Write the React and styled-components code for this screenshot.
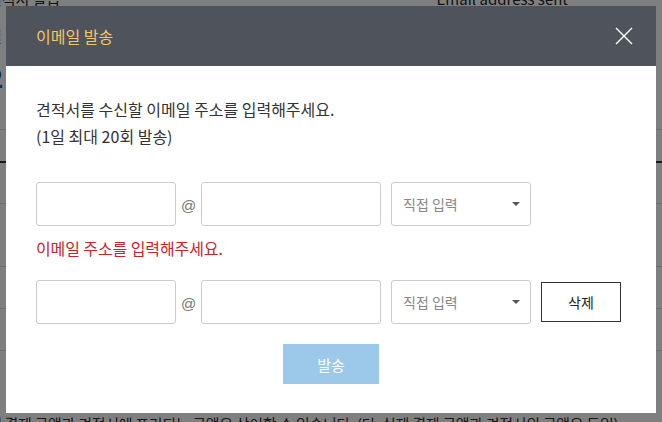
import React from 'react';
import styled, { createGlobalStyle } from 'styled-components';

const Global = createGlobalStyle`
  html, body {
    margin: 0;
    padding: 0;
    background: #fff;
  }
  body {
    font-family: "Noto Sans CJK KR", "Noto Sans", sans-serif;
    width: 662px;
    height: 422px;
    overflow: hidden;
  }
`;

const Screen = styled.div`
  position: relative;
  width: 662px;
  height: 422px;
  overflow: hidden;
`;

/* page behind the dim layer */
const Page = styled.div`
  margin-left: -12px;
  width: 700px;
  color: #222;
  font-size: 15px;
`;

const PageTop = styled.div`
  height: 129px;
  display: grid;
  grid-template-rows: 14px 34px auto;
  align-items: start;
`;

const PageTopRow = styled.div`
  display: flex;
  justify-content: space-between;
  line-height: 14px;
  margin-top: -8px;
  padding-right: 120px;
`;

const PageLabel = styled.div`
  line-height: 20px;
  margin-top: 12px;
`;

const BigNumber = styled.div`
  color: #1f5fa8;
  font-size: 26px;
  font-weight: 700;
  line-height: 30px;
  margin-top: 14px;
`;

const TableRow = styled.div`
  height: ${p => p.$h}px;
  border-top: ${p => (p.$strong ? '2px solid #333' : '1px solid #ddd')};
  box-sizing: border-box;
`;

const PageNote = styled.div`
  margin-top: 21px;
  white-space: nowrap;
  color: #333;
  letter-spacing: -0.3px;
`;

const Dim = styled.div`
  position: absolute;
  inset: 0;
  background: rgba(0, 0, 0, 0.5);
`;

/* modal */
const Modal = styled.div`
  position: absolute;
  top: 6px;
  left: 6px;
  width: 650px;
  height: 407px;
  background: #fff;
  display: flex;
  flex-direction: column;
`;

const Header = styled.div`
  height: 60px;
  background: #4f535b;
  display: flex;
  align-items: center;
  justify-content: space-between;
  padding: 0 22px 0 30px;
`;

const Title = styled.h2`
  margin: 0;
  font-size: 16px;
  font-weight: 400;
  color: #f5c66a;
`;

const CloseButton = styled.button`
  border: 0;
  background: none;
  padding: 0;
  width: 20px;
  height: 20px;
  display: flex;
  align-items: center;
  justify-content: center;
  cursor: pointer;
`;

const Body = styled.div`
  padding: 30px 30px 0;
  display: flex;
  flex-direction: column;
`;

const Guide = styled.p`
  margin: 0;
  font-size: 16px;
  line-height: 27px;
  color: #333;
`;

const EmailRow = styled.div`
  display: flex;
  align-items: center;
  height: 44px;
  margin-top: ${p => p.$mt}px;
`;

const Field = styled.input`
  box-sizing: border-box;
  width: ${p => p.$w}px;
  height: 44px;
  border: 1px solid #ccc;
  border-radius: 3px;
  padding: 0 10px;
  font-size: 14px;
  font-family: inherit;
  outline: none;
`;

const At = styled.span`
  width: 25px;
  text-align: center;
  color: #777;
  font-size: 15px;
  font-family: "Liberation Sans", sans-serif;
  padding-top: 3px;
`;

const Select = styled.div`
  box-sizing: border-box;
  width: 140px;
  height: 44px;
  margin-left: 10px;
  border: 1px solid #ccc;
  border-radius: 3px;
  padding: 0 10px 0 11px;
  display: flex;
  align-items: center;
  justify-content: space-between;
  font-size: 14px;
  color: #888;
`;

const Caret = styled.span`
  width: 0;
  height: 0;
  border-left: 4px solid transparent;
  border-right: 4px solid transparent;
  border-top: 4px solid #555;
`;

const DeleteButton = styled.button`
  box-sizing: border-box;
  width: 80px;
  height: 40px;
  margin-left: 10px;
  border: 1px solid #333;
  background: #fff;
  color: #222;
  font-size: 14px;
  font-family: inherit;
  cursor: pointer;
`;

const Error = styled.p`
  margin: 11px 0 0;
  font-size: 16px;
  line-height: 22px;
  color: #c8242c;
  letter-spacing: -0.1px;
`;

const SendButton = styled.button`
  align-self: center;
  width: 96px;
  height: 40px;
  margin-top: 20px;
  border: 0;
  background: #9cc8ea;
  color: #fff;
  font-size: 15px;
  font-family: inherit;
  cursor: default;
`;

const CloseIcon = () => (
  <svg width="18" height="18" viewBox="0 0 18 18">
    <path d="M1 1L17 17M17 1L1 17" stroke="#fff" strokeWidth="1.4" fill="none" />
  </svg>
);

const EmailInputs = ({ mt, removable }) => (
  <EmailRow $mt={mt}>
    <Field $w={140} />
    <At>@</At>
    <Field $w={180} />
    <Select>
      직접 입력
      <Caret />
    </Select>
    {removable && <DeleteButton>삭제</DeleteButton>}
  </EmailRow>
);

export default function App() {
  return (
    <Screen>
      <Global />
      <Page>
        <PageTop>
          <PageTopRow>
            <span>견적서 발급</span>
            <span>Email address sent</span>
          </PageTopRow>
          <PageLabel>일</PageLabel>
          <BigNumber>2</BigNumber>
        </PageTop>
        <TableRow $h={32} />
        <TableRow $h={42} $strong />
        <TableRow $h={63} />
        <TableRow $h={42} />
        <TableRow $h={42} />
        <TableRow $h={42} />
        <PageNote>
          제 결제 금액과 견적서에 표기되는 금액은 상이할 수 있습니다. (단, 실제 결제 금액과 견적서의 금액은 동일)
        </PageNote>
      </Page>
      <Dim />
      <Modal>
        <Header>
          <Title>이메일 발송</Title>
          <CloseButton aria-label="닫기">
            <CloseIcon />
          </CloseButton>
        </Header>
        <Body>
          <Guide>
            견적서를 수신할 이메일 주소를 입력해주세요.
            <br />
            (1일 최대 20회 발송)
          </Guide>
          <EmailInputs mt={32} />
          <Error>이메일 주소를 입력해주세요.</Error>
          <EmailInputs mt={21} removable />
          <SendButton>발송</SendButton>
        </Body>
      </Modal>
    </Screen>
  );
}
